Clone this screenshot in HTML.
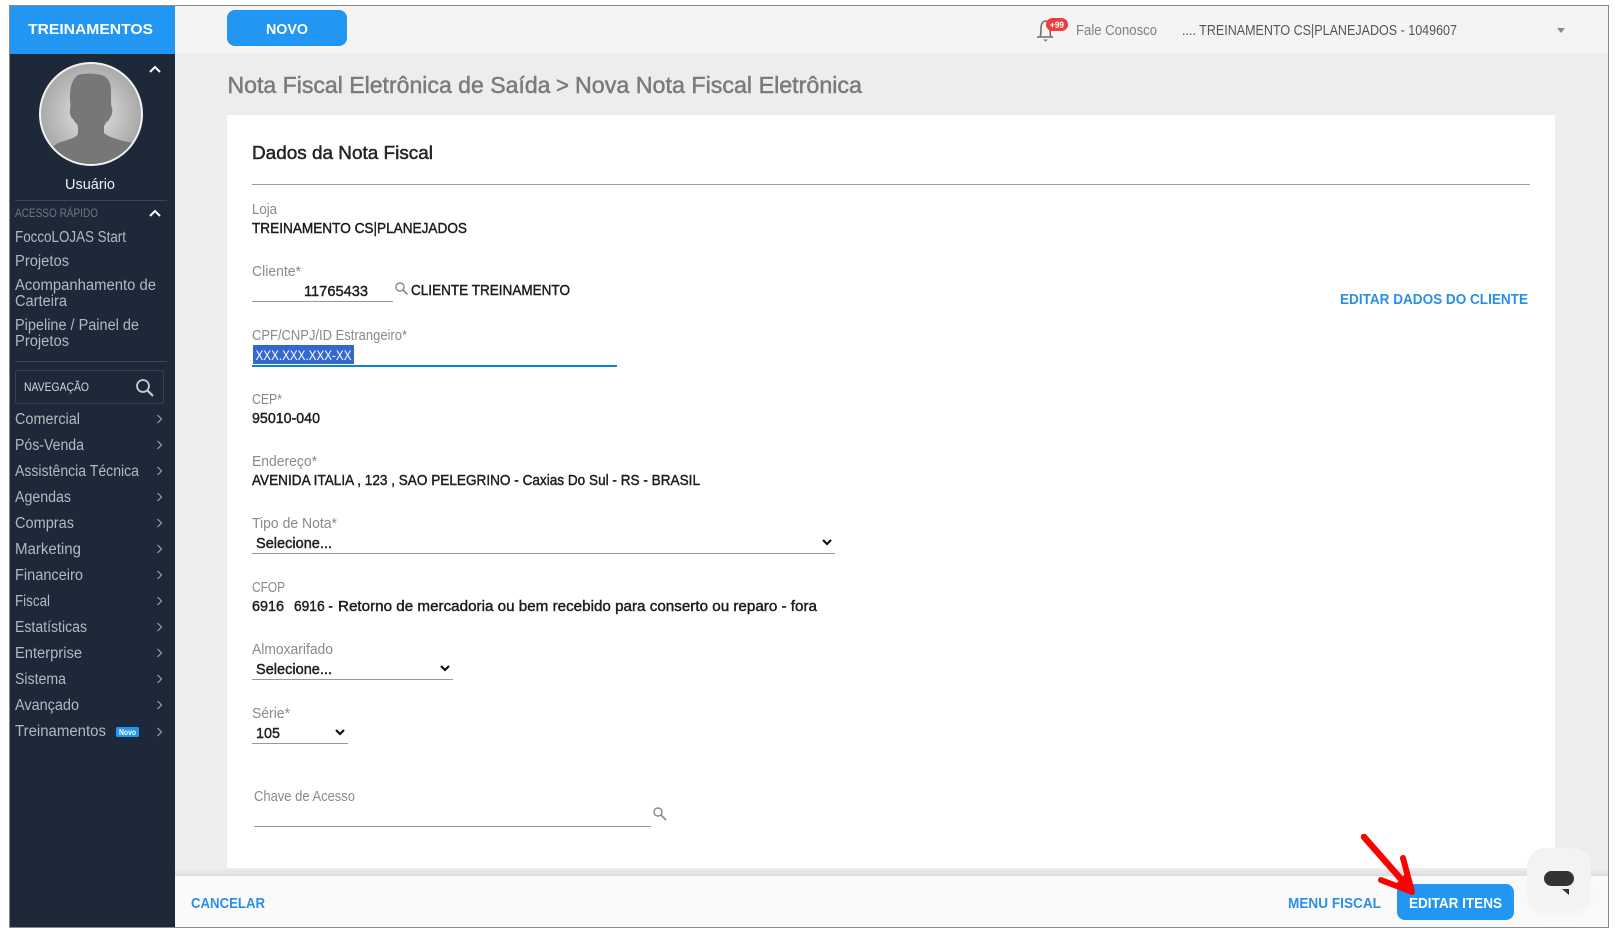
<!DOCTYPE html>
<html lang="pt-BR">
<head>
<meta charset="utf-8">
<title>Nova Nota Fiscal Eletrônica</title>
<style>
html,body{margin:0;padding:0;width:1615px;height:937px;overflow:hidden;background:#fff}
svg{display:block;position:absolute;left:0;top:0}
text{font-family:"Liberation Sans",Arial,sans-serif}
.m{fill:#b4b9bf;font-size:15.5px}
.l{fill:#8a8a8a;font-size:14.5px}
.v{fill:#1c1c1c;font-size:14.5px;stroke:#1c1c1c;stroke-width:.42px}
.b{fill:#2b8fe6;font-size:14.5px;font-weight:bold}
.c{fill:none;stroke:#9aa0a7;stroke-width:1.2}
.d{fill:none;stroke:#111;stroke-width:2.2}
</style>
</head>
<body>
<svg width="1615" height="937" viewBox="0 0 1615 937" xmlns="http://www.w3.org/2000/svg">
<defs>
<radialGradient id="av" cx="50%" cy="50%" r="55%"><stop offset="0" stop-color="#e6e6e6"/><stop offset="1" stop-color="#a2a2a2"/></radialGradient>
<clipPath id="ac"><circle cx="91" cy="114" r="50"/></clipPath>
<linearGradient id="fs" x1="0" y1="0" x2="0" y2="1"><stop offset="0" stop-color="#eeeeee"/><stop offset="1" stop-color="#dcdcdc"/></linearGradient>
<radialGradient id="cs" cx="50%" cy="50%" r="50%"><stop offset="0" stop-color="#cfd6d8" stop-opacity=".7"/><stop offset="1" stop-color="#fafafa" stop-opacity="0"/></radialGradient>
</defs>

<!-- page frame -->
<rect x="9.5" y="5.5" width="1599" height="922" fill="#ededed" stroke="#8a8a8a" stroke-width="1"/>

<!-- top bar -->
<rect x="175" y="6" width="1433" height="48" fill="#f4f4f4"/>
<rect x="10" y="6" width="165" height="48" fill="#2196f3"/>
<text x="28" y="34" font-size="15" font-weight="bold" fill="#fff" textLength="125" lengthAdjust="spacingAndGlyphs">TREINAMENTOS</text>
<rect x="227" y="10" width="120" height="36" rx="8" fill="#2196f3"/>
<text x="266" y="34" font-size="14.5" font-weight="bold" fill="#fff" textLength="42" lengthAdjust="spacingAndGlyphs">NOVO</text>

<!-- bell -->
<path d="M1037 37h16M1040 37c1-2 1-5 1-9 0-4 2-7 4.500-7s4.500 3 4.500 7c0 4 0 7 1 9" fill="none" stroke="#6f6f6f" stroke-width="1.600"/>
<path d="M1043 39.500h5l-2.500 2z" fill="#6f6f6f"/>
<rect x="1046" y="18" width="22" height="13" rx="6.500" fill="#f23c3c"/>
<text x="1050" y="28" font-size="9" font-weight="bold" fill="#fff" textLength="14" lengthAdjust="spacingAndGlyphs">+99</text>
<text x="1076" y="35" font-size="14.500" fill="#808080" textLength="81" lengthAdjust="spacingAndGlyphs">Fale Conosco</text>
<text x="1182" y="35" font-size="14.500" fill="#555" textLength="275" lengthAdjust="spacingAndGlyphs">.... TREINAMENTO CS|PLANEJADOS - 1049607</text>
<path d="M1557 28h8l-4 5z" fill="#888"/>

<!-- sidebar -->
<rect x="10" y="54" width="165" height="873" fill="#1d2939"/>
<circle cx="91" cy="114" r="51" fill="url(#av)" stroke="#f2f2f2" stroke-width="2"/>
<g clip-path="url(#ac)">
<path d="M78 75c6-2 20-2 26 1 5 3 7 8 7 15 0 7 0 13 .5 16 1.500 2 1 7-1 10-1 2-2 4-4 5-.8 1.500-1.800 3-2.500 4v7c4 4 14 7 29 10l8 3v30H52v-29l6-4c8-3 20-5 20-10v-7c-2-3-4-5-5-7-3-2-3.500-7-3-10 .5-1 .5-4 0-9-.5-12 2-21 8-25z" fill="#777"/>
</g>
<path class="c" style="stroke:#fff;stroke-width:2" d="M150 72l5-5 5 5"/>
<text x="65" y="189" font-size="14.500" fill="#eef0f2" textLength="50" lengthAdjust="spacingAndGlyphs">Usuário</text>
<rect x="15" y="200" width="152" height="1" fill="#3b4758"/>
<text x="15" y="217" font-size="11.500" fill="#6f7781" textLength="83" lengthAdjust="spacingAndGlyphs">ACESSO RÁPIDO</text>
<path class="c" style="stroke:#fff;stroke-width:2" d="M150 216l5-5 5 5"/>
<text class="m" x="15" y="242" textLength="111" lengthAdjust="spacingAndGlyphs">FoccoLOJAS Start</text>
<text class="m" x="15" y="266" textLength="54" lengthAdjust="spacingAndGlyphs">Projetos</text>
<text class="m" x="15" y="290" textLength="141" lengthAdjust="spacingAndGlyphs">Acompanhamento de</text>
<text class="m" x="15" y="306" textLength="52" lengthAdjust="spacingAndGlyphs">Carteira</text>
<text class="m" x="15" y="330" textLength="124" lengthAdjust="spacingAndGlyphs">Pipeline / Painel de</text>
<text class="m" x="15" y="346" textLength="54" lengthAdjust="spacingAndGlyphs">Projetos</text>
<rect x="15" y="361" width="152" height="1" fill="#3b4758"/>
<rect x="15.500" y="370.500" width="148" height="33" rx="2" fill="none" stroke="#36424f"/>
<text x="24" y="391" font-size="12" fill="#d5d8dc" textLength="65" lengthAdjust="spacingAndGlyphs">NAVEGAÇÃO</text>
<circle cx="143" cy="386" r="6" fill="none" stroke="#c9cdd2" stroke-width="1.800"/>
<path d="M147.500 390.500l5.500 5.500" stroke="#c9cdd2" stroke-width="2.200"/>

<text class="m" x="15" y="424" textLength="65" lengthAdjust="spacingAndGlyphs">Comercial</text>
<text class="m" x="15" y="450" textLength="69" lengthAdjust="spacingAndGlyphs">Pós-Venda</text>
<text class="m" x="15" y="476" textLength="124" lengthAdjust="spacingAndGlyphs">Assistência Técnica</text>
<text class="m" x="15" y="502" textLength="56" lengthAdjust="spacingAndGlyphs">Agendas</text>
<text class="m" x="15" y="528" textLength="59" lengthAdjust="spacingAndGlyphs">Compras</text>
<text class="m" x="15" y="554" textLength="66" lengthAdjust="spacingAndGlyphs">Marketing</text>
<text class="m" x="15" y="580" textLength="68" lengthAdjust="spacingAndGlyphs">Financeiro</text>
<text class="m" x="15" y="606" textLength="35" lengthAdjust="spacingAndGlyphs">Fiscal</text>
<text class="m" x="15" y="632" textLength="72" lengthAdjust="spacingAndGlyphs">Estatísticas</text>
<text class="m" x="15" y="658" textLength="67" lengthAdjust="spacingAndGlyphs">Enterprise</text>
<text class="m" x="15" y="684" textLength="51" lengthAdjust="spacingAndGlyphs">Sistema</text>
<text class="m" x="15" y="710" textLength="64" lengthAdjust="spacingAndGlyphs">Avançado</text>
<text class="m" x="15" y="736" textLength="91" lengthAdjust="spacingAndGlyphs">Treinamentos</text>
<rect x="116" y="727" width="23" height="10" rx="1.500" fill="#2196f3"/>
<text x="119" y="735" font-size="8" font-weight="bold" fill="#fff" textLength="17" lengthAdjust="spacingAndGlyphs">Novo</text>
<path class="c" d="M157.500 415l4 4-4 4M157.500 441l4 4-4 4M157.500 467l4 4-4 4M157.500 493l4 4-4 4M157.500 519l4 4-4 4M157.500 545l4 4-4 4M157.500 571l4 4-4 4M157.500 597l4 4-4 4M157.500 623l4 4-4 4M157.500 649l4 4-4 4M157.500 675l4 4-4 4M157.500 701l4 4-4 4M157.500 728l4 4-4 4"/>

<!-- title -->
<g font-size="23.500" fill="#7b7b7b" style="stroke:#7b7b7b;stroke-width:.5px">
<text x="227.500" y="93" textLength="323" lengthAdjust="spacingAndGlyphs">Nota Fiscal Eletrônica de Saída</text>
<text x="556" y="93" textLength="13" lengthAdjust="spacingAndGlyphs">&gt;</text>
<text x="575" y="93" textLength="287" lengthAdjust="spacingAndGlyphs">Nova Nota Fiscal Eletrônica</text>
</g>

<!-- card -->
<rect x="227" y="115" width="1328" height="753" fill="#fff"/>
<text x="252" y="159" font-size="18.500" fill="#222" textLength="181" lengthAdjust="spacingAndGlyphs" style="stroke:#222;stroke-width:.45px">Dados da Nota Fiscal</text>
<rect x="252" y="184" width="1278" height="1" fill="#9c9c9c"/>

<text class="l" x="252" y="214" textLength="25" lengthAdjust="spacingAndGlyphs">Loja</text>
<text class="v" x="252" y="233" textLength="215" lengthAdjust="spacingAndGlyphs">TREINAMENTO CS|PLANEJADOS</text>

<text class="l" x="252" y="276" textLength="49" lengthAdjust="spacingAndGlyphs">Cliente*</text>
<text class="v" x="304" y="296" textLength="64" lengthAdjust="spacingAndGlyphs">11765433</text>
<rect x="252" y="301" width="141" height="1" fill="#999"/>
<circle cx="400" cy="287" r="4" fill="none" stroke="#8a8a8a" stroke-width="1.400"/>
<path d="M403 290l4.500 4.500" stroke="#8a8a8a" stroke-width="1.700"/>
<text class="v" x="411" y="295" textLength="159" lengthAdjust="spacingAndGlyphs">CLIENTE TREINAMENTO</text>
<text class="b" x="1340" y="304" textLength="188" lengthAdjust="spacingAndGlyphs">EDITAR DADOS DO CLIENTE</text>

<text class="l" x="252" y="340" textLength="155" lengthAdjust="spacingAndGlyphs">CPF/CNPJ/ID Estrangeiro*</text>
<rect x="253" y="345" width="101" height="19" fill="#3367d1"/>
<text x="255.500" y="360" font-size="14" fill="#fff" textLength="96" lengthAdjust="spacingAndGlyphs">XXX.XXX.XXX-XX</text>
<rect x="252" y="365" width="365" height="2" fill="#0b84d4"/>

<text class="l" x="252" y="404" textLength="30" lengthAdjust="spacingAndGlyphs">CEP*</text>
<text class="v" x="252" y="423" textLength="68" lengthAdjust="spacingAndGlyphs">95010-040</text>

<text class="l" x="252" y="466" textLength="65" lengthAdjust="spacingAndGlyphs">Endereço*</text>
<text class="v" x="252" y="485" textLength="448" lengthAdjust="spacingAndGlyphs">AVENIDA ITALIA , 123 , SAO PELEGRINO - Caxias Do Sul - RS - BRASIL</text>

<text class="l" x="252" y="528" textLength="85" lengthAdjust="spacingAndGlyphs">Tipo de Nota*</text>
<text class="v" x="256" y="548" textLength="76" lengthAdjust="spacingAndGlyphs">Selecione...</text>
<path class="d" d="M823 540l4 4 4-4"/>
<rect x="252" y="553" width="583" height="1" fill="#999"/>

<text class="l" x="252" y="592" textLength="33" lengthAdjust="spacingAndGlyphs">CFOP</text>
<text class="v" x="252" y="611" textLength="32" lengthAdjust="spacingAndGlyphs">6916</text>
<text class="v" x="294" y="611" textLength="39" lengthAdjust="spacingAndGlyphs">6916 -</text>
<text class="v" x="338" y="611" textLength="479" lengthAdjust="spacingAndGlyphs">Retorno de mercadoria ou bem recebido para conserto ou reparo - fora</text>

<text class="l" x="252" y="654" textLength="81" lengthAdjust="spacingAndGlyphs">Almoxarifado</text>
<text class="v" x="256" y="674" textLength="76" lengthAdjust="spacingAndGlyphs">Selecione...</text>
<path class="d" d="M441 666l4 4 4-4"/>
<rect x="252" y="679" width="201" height="1" fill="#999"/>

<text class="l" x="252" y="718" textLength="38" lengthAdjust="spacingAndGlyphs">Série*</text>
<text class="v" x="256" y="738" textLength="24" lengthAdjust="spacingAndGlyphs">105</text>
<path class="d" d="M336 730l4 4 4-4"/>
<rect x="252" y="743" width="96" height="1" fill="#999"/>

<text class="l" x="254" y="801" textLength="101" lengthAdjust="spacingAndGlyphs">Chave de Acesso</text>
<rect x="254" y="826" width="397" height="1" fill="#999"/>
<circle cx="658" cy="812" r="4" fill="none" stroke="#8a8a8a" stroke-width="1.400"/>
<path d="M661 815l5 5" stroke="#8a8a8a" stroke-width="1.700"/>

<!-- footer -->
<rect x="175" y="868" width="1433" height="8" fill="url(#fs)"/>
<rect x="175" y="876" width="1433" height="51" fill="#fafafa"/>
<text class="b" x="191" y="908" textLength="74" lengthAdjust="spacingAndGlyphs">CANCELAR</text>
<text class="b" x="1288" y="908" textLength="93" lengthAdjust="spacingAndGlyphs">MENU FISCAL</text>
<rect x="1397" y="884" width="117" height="36" rx="8" fill="#2196f3"/>
<text x="1409" y="908" font-size="14.500" font-weight="bold" fill="#fff" textLength="93" lengthAdjust="spacingAndGlyphs">EDITAR ITENS</text>

<!-- chat widget -->
<ellipse cx="1559" cy="895" rx="50" ry="32" fill="url(#cs)"/>
<rect x="1527" y="848" width="64" height="64" rx="18" fill="#f3f3f3"/>
<rect x="1544" y="871" width="30" height="15" rx="7.500" fill="#333"/>
<path d="M1562 889h7v6z" fill="#333"/>

<!-- red arrow -->
<g fill="none" stroke="#ff0000" stroke-linecap="round" stroke-linejoin="round">
<path d="M1364 837L1408 887" stroke-width="6.500"/>
<path d="M1403 858L1412 892L1381 880" stroke-width="6"/>
</g>
<path d="M1413 893L1396 884L1406 873z" fill="#ff0000"/>
</svg>
</body>
</html>
